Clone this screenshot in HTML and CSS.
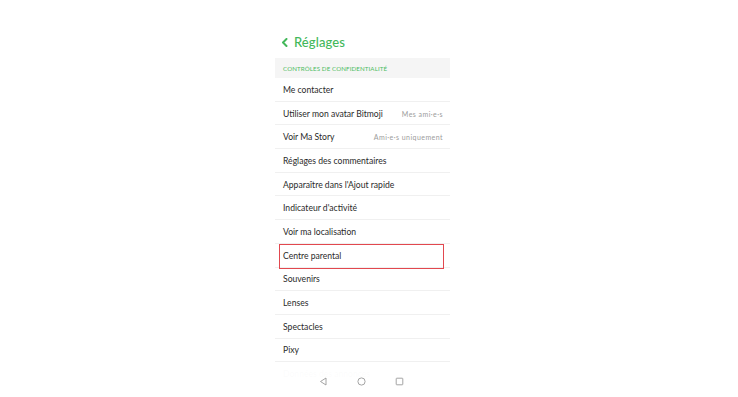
FILE: index.html
```html
<!DOCTYPE html>
<html lang="fr">
<head>
    <meta charset="UTF-8">
    <meta name="viewport" content="width=device-width, initial-scale=1.0">
    <title>Réglages</title>
    <link rel="stylesheet" href="styles.css">
</head>
<body>

<div class="screen">
    <!-- Header -->
    <div class="top-bar">
        <svg class="back" width="8" height="9" viewBox="0 0 8 9">
            <path d="M5.5 1 L2 4.5 L5.5 8" fill="none" stroke="#43b85a" stroke-width="2" stroke-linecap="round" stroke-linejoin="round"/>
        </svg>
        <h1>Réglages</h1>
    </div>

    <div class="section-title">CONTRÔLES DE CONFIDENTIALITÉ</div>

    <ul class="settings">
        <li>Me contacter</li>
        <li>Utiliser mon avatar Bitmoji <span class="value">Mes ami·e·s</span></li>
        <li>Voir Ma Story <span class="value">Ami·e·s uniquement</span></li>
        <li>Réglages des commentaires</li>
        <li>Apparaître dans l'Ajout rapide</li>
        <li>Indicateur d'activité</li>
        <li>Voir ma localisation</li>
        <li class="highlight">Centre parental</li>
        <li>Souvenirs</li>
        <li>Lenses</li>
        <li>Spectacles</li>
        <li>Pixy</li>
        <li>Données des annonces</li>
    </ul>

    <!-- Android nav bar -->
    <div class="nav-bar">
        <svg width="9" height="9" viewBox="0 0 9 9">
            <path d="M7 1 L1.5 4.5 L7 8 Z" fill="none" stroke="#9a9a9a" stroke-width="0.9" stroke-linejoin="round"/>
        </svg>
        <svg width="9" height="9" viewBox="0 0 9 9">
            <circle cx="4.5" cy="4.5" r="3.6" fill="none" stroke="#9a9a9a" stroke-width="0.9"/>
        </svg>
        <svg width="9" height="9" viewBox="0 0 9 9">
            <rect x="1.2" y="1.2" width="6.6" height="6.6" rx="0.6" fill="none" stroke="#9a9a9a" stroke-width="0.9"/>
        </svg>
    </div>
</div>

</body>
</html>
```

FILE: styles.css
```css
* {
    margin: 0;
    padding: 0;
    box-sizing: border-box;
}

body {
    font-family: 'Lato', 'Open Sans', sans-serif;
    background: #fff;
    color: #222;
    width: 738px;
    height: 397px;
    overflow: hidden;
}

.screen {
    position: relative;
    width: 175px;
    height: 397px;
    margin-left: 275px;
    overflow: hidden;
}

.top-bar {
    display: flex;
    align-items: center;
    gap: 5px;
    height: 58px;
    padding: 26px 0 0 6px;
}

.top-bar h1 {
    font-size: 13px;
    font-weight: 500;
    color: #43b85a;
    letter-spacing: 0.1px;
}

.section-title {
    height: 20px;
    line-height: 21px;
    background: #f5f5f5;
    padding-left: 8px;
    font-size: 6.2px;
    font-weight: 400;
    color: #4cbc62;
    letter-spacing: 0.1px;
}

.settings {
    list-style: none;
}

.settings li {
    position: relative;
    display: flex;
    justify-content: space-between;
    align-items: center;
    height: 23.7px;
    padding: 1px 7px 0 8px;
    border-bottom: 1px solid #f0f0f0;
    font-size: 8.6px;
    font-weight: 400;
    color: #2a2a2a;
}

.settings .value {
    font-size: 7px;
    font-weight: 400;
    color: #9c9c9c;
    letter-spacing: 0.45px;
}

.settings .highlight::after {
    content: '';
    position: absolute;
    top: 0;
    left: 4px;
    right: 6px;
    bottom: -2px;
    border: 1.5px solid #e2484f;
}

.nav-bar {
    position: absolute;
    left: 0;
    right: 0;
    bottom: 0;
    height: 32px;
    background: rgba(255, 255, 255, 0.985);
    display: flex;
    align-items: center;
    justify-content: center;
    gap: 29px;
    padding-right: 2px;
}
```
